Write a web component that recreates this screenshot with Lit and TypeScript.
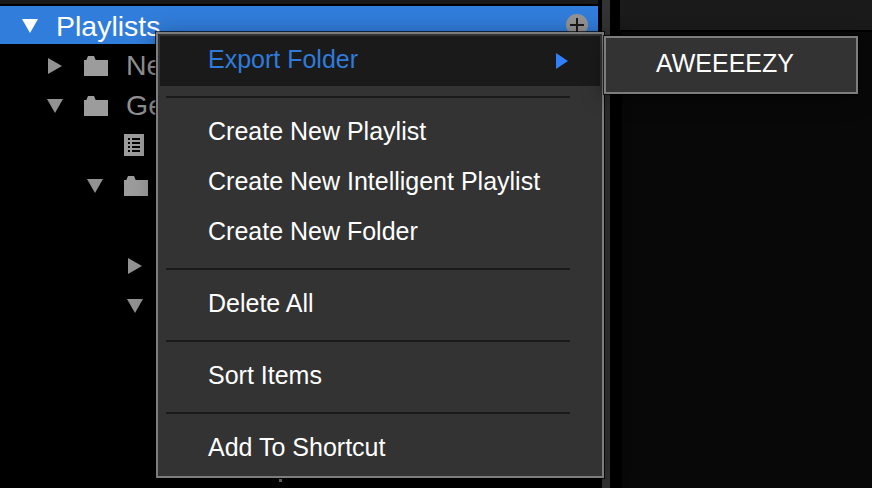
import { LitElement, html, css, svg, nothing } from "lit";
import { customElement, property } from "lit/decorators.js";

type Row = { indent: number; open?: boolean; icon?: "folder" | "list"; label?: string };

const rows: Row[] = [
  { indent: 45, open: false, icon: "folder", label: "New" },
  { indent: 45, open: true, icon: "folder", label: "Genre" },
  { indent: 85, icon: "list" },
  { indent: 85, open: true, icon: "folder" },
  { indent: 125 },
  { indent: 125, open: false },
  { indent: 125, open: true },
];

const groups: string[][] = [
  ["Create New Playlist", "Create New Intelligent Playlist", "Create New Folder"],
  ["Delete All"],
  ["Sort Items"],
  ["Add To Shortcut"],
];

const icons = {
  folder: svg`<path d="M0 4H2.3L4 0H10L11.7 4H24V20H0Z"/>`,
  list: svg`<path fill-rule="evenodd" d="M0 0H20V22H0ZM4 4V6H6V4ZM8 4V6H16V4ZM4 8V10H6V8ZM8 8V10H16V8ZM4 12V14H6V12ZM8 12V14H16V12ZM4 16V18H6V16ZM8 16V18H16V16Z"/>`,
};

@customElement("tree-arrow")
class TreeArrow extends LitElement {
  @property({ type: Boolean }) open = false;
  static styles = css`
    :host { display: block; width: 20px; height: 20px; flex: none; }
    svg { display: block; fill: currentColor; }
  `;
  render() {
    return html`<svg width="20" height="20" viewBox="0 0 20 20">
      ${this.open ? svg`<path d="M2 3H18L10 17Z"/>` : svg`<path d="M3 2V18L17 10Z"/>`}
    </svg>`;
  }
}

@customElement("context-menu")
class ContextMenu extends LitElement {
  static styles = css`
    :host {
      display: block; box-sizing: border-box; width: 448px; height: 446px;
      padding: 2px; border: 2px solid #7d7d7d; background: #333;
      outline: 1px solid rgba(0, 0, 0, 0.7);
      box-shadow: 0 4px 22px rgba(0, 0, 0, 0.4);
      font-size: 25px; color: #fff;
    }
    .item {
      display: flex; align-items: center; justify-content: space-between;
      box-sizing: border-box; height: 50px; padding: 0 32px 4px 48px; white-space: nowrap;
    }
    .active { background: #1a1a1a; color: #2f7bdc; }
    .arrow { display: block; fill: #3080fc; margin-top: 4px; }
    .line { height: 2px; margin: 10px 30px 10px 6px; background: #1a1a1a; }
  `;
  render() {
    return html`
      <div class="item active">
        <span>Export Folder</span>
        <svg class="arrow" width="12" height="16" viewBox="0 0 12 16"><path d="M0 0L12 8L0 16Z"/></svg>
      </div>
      ${groups.map((g) => html`<div class="line"></div>${g.map((t) => html`<div class="item"><span>${t}</span></div>`)}`)}
    `;
  }
}

@customElement("app-root")
class AppRoot extends LitElement {
  static styles = css`
    :host {
      display: block; position: relative; width: 872px; height: 488px; overflow: hidden;
      background: #000; font-family: "Liberation Sans", Arial, sans-serif;
    }
    .layout { display: flex; height: 488px; }
    .side { width: 598px; flex: none; overflow: hidden; }
    .strip { height: 4px; margin-bottom: 2px; background: #1a1a1a; }
    .head {
      display: flex; align-items: center; box-sizing: border-box; height: 38px;
      padding: 0 10px 0 20px; background: #317ddb; color: #fff; font-size: 28.5px;
    }
    .head tree-arrow { margin-top: 2px; }
    .title { flex: 1; margin-left: 16px; line-height: 34px; padding-top: 2px; }
    .plus { display: block; }
    .row { display: flex; align-items: center; height: 40px; color: #929292; font-size: 28.5px; }
    .tree { padding-top: 2px; }
    .gap { width: 20px; }
    .icon { display: block; margin-left: 19px; fill: #9c9c9c; flex: none; }
    .list { margin-bottom: 2px; }
    .label { margin-left: 18px; padding-bottom: 2px; }
    .bar { width: 8px; margin-left: 4px; background: #333; flex: none; }
    .main { flex: 1; margin-left: 10px; display: flex; flex-direction: column; }
    .top { height: 30px; background: #1a1a1a; }
    .body { flex: 1; margin: 2px 0 0 2px; background: #080808; }
    .speck { width: 3px; height: 3px; background: #777; margin: 153px 0 0 279px; }
    context-menu { position: absolute; left: 156px; top: 32px; }
    .sub {
      position: absolute; left: 604px; top: 36px; width: 254px; height: 58px;
      box-sizing: border-box; border: 2px solid #7d7d7d; outline: 1px solid rgba(0, 0, 0, 0.7);
      background: #333; color: #fff; font-size: 25px; line-height: 50px; padding-left: 50px;
      box-shadow: 0 4px 22px rgba(0, 0, 0, 0.4);
    }
  `;

  private row(r: Row) {
    return html`<div class="row" style="padding-left:${r.indent}px">
      ${r.open === undefined ? html`<span class="gap"></span>` : html`<tree-arrow ?open=${r.open}></tree-arrow>`}
      ${r.icon
        ? html`<svg class="icon ${r.icon}" width=${r.icon === "list" ? 20 : 24} height=${r.icon === "list" ? 22 : 20}>${icons[r.icon]}</svg>`
        : nothing}
      ${r.label ? html`<span class="label">${r.label}</span>` : nothing}
    </div>`;
  }

  render() {
    return html`
      <div class="layout">
        <div class="side">
          <div class="strip"></div>
          <div class="head">
            <tree-arrow open></tree-arrow>
            <span class="title">Playlists</span>
            <svg class="plus" width="22" height="22" viewBox="0 0 22 22">
              <circle cx="11" cy="11" r="11" fill="#949494"/>
              <path d="M4 11H18M11 4V18" stroke="#1a1a1a" stroke-width="2"/>
            </svg>
          </div>
          <div class="tree">${rows.map((r) => this.row(r))}</div>
          <div class="speck"></div>
        </div>
        <div class="bar"></div>
        <div class="main"><div class="top"></div><div class="body"></div></div>
      </div>
      <context-menu></context-menu>
      <div class="sub">AWEEEEZY</div>
    `;
  }
}
